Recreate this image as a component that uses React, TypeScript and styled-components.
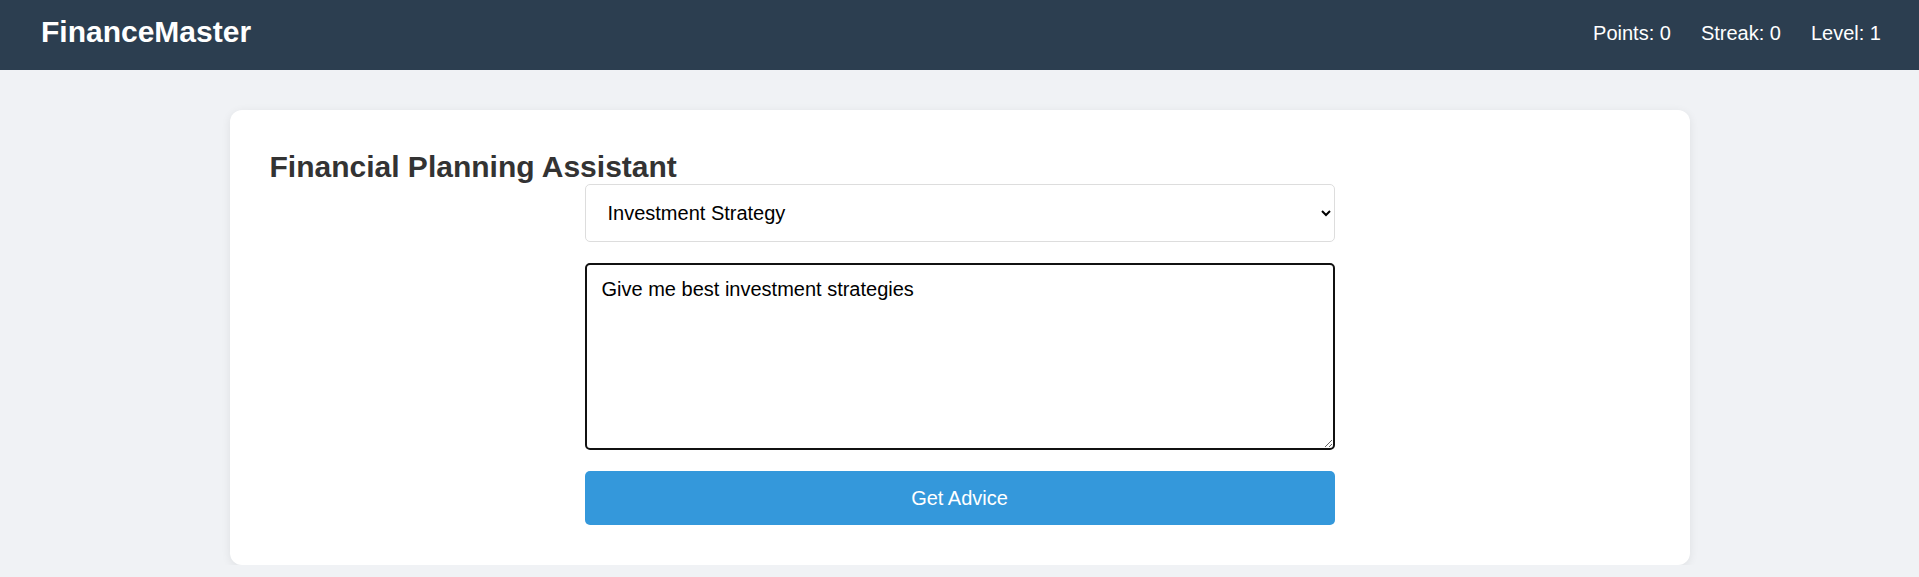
import React, { useState } from "react"
import styled, { createGlobalStyle } from "styled-components"

const GlobalStyle = createGlobalStyle`
  html, body {
    margin: 0;
    padding: 0;
    background: #f0f2f5;
    font-family: "Liberation Sans", Arial, sans-serif;
  }
`

const Header = styled.header`
  display: flex;
  align-items: center;
  justify-content: space-between;
  height: 70px;
  padding: 0 38px 0 41px;
  background: #2c3e50;
  color: white;
  box-sizing: border-box;
`

const Logo = styled.h1`
  margin: 0;
  font-size: 30px;
  font-weight: 700;
  line-height: 1;
  position: relative;
  top: -3px;
`

const Stats = styled.div`
  display: flex;
  gap: 30px;
  font-size: 20px;
  position: relative;
  top: -2px;
`

const Main = styled.main`
  display: flex;
  justify-content: center;
  padding-top: 40px;
`

const Card = styled.section`
  width: 1460px;
  box-sizing: border-box;
  padding: 40px;
  background: white;
  border-radius: 12px;
  box-shadow: 0 2px 10px rgba(0, 0, 0, 0.08);
`

const Title = styled.h2`
  margin: 0;
  height: 34px;
  font-size: 30px;
  font-weight: 700;
  line-height: 34px;
  color: #333;
`

const Form = styled.div`
  display: flex;
  flex-direction: column;
  gap: 21px;
  width: 750px;
  margin: 0 auto;
`

const Select = styled.select`
  height: 58px;
  padding: 0 18px;
  font-family: "Liberation Sans", Arial, sans-serif;
  font-size: 20px;
  color: #000;
  background: white;
  border: 1px solid #ddd;
  border-radius: 5px;
  outline: none;
`

const TextArea = styled.textarea`
  height: 187px;
  box-sizing: border-box;
  padding: 13px 15px;
  font-family: "Liberation Sans", Arial, sans-serif;
  font-size: 20px;
  color: #000;
  border: 2px solid #111;
  border-radius: 5px;
  outline: none;
  resize: vertical;
`

const Button = styled.button`
  height: 54px;
  font-family: "Liberation Sans", Arial, sans-serif;
  font-size: 20px;
  color: white;
  background: #3498db;
  border: none;
  border-radius: 5px;
  cursor: pointer;
`

export default function App() {
  const [topic, setTopic] = useState("investment")
  const [query, setQuery] = useState("Give me best investment strategies")

  return (
    <>
      <GlobalStyle />
      <Header>
        <Logo>FinanceMaster</Logo>
        <Stats>
          <span>Points: 0</span>
          <span>Streak: 0</span>
          <span>Level: 1</span>
        </Stats>
      </Header>
      <Main>
        <Card>
          <Title>Financial Planning Assistant</Title>
          <Form>
            <Select value={topic} onChange={(e) => setTopic(e.target.value)}>
              <option value="budget">Budget Planning</option>
              <option value="investment">Investment Strategy</option>
              <option value="savings">Savings Goals</option>
              <option value="debt">Debt Management</option>
            </Select>
            <TextArea value={query} onChange={(e) => setQuery(e.target.value)} />
            <Button>Get Advice</Button>
          </Form>
        </Card>
      </Main>
    </>
  )
}
